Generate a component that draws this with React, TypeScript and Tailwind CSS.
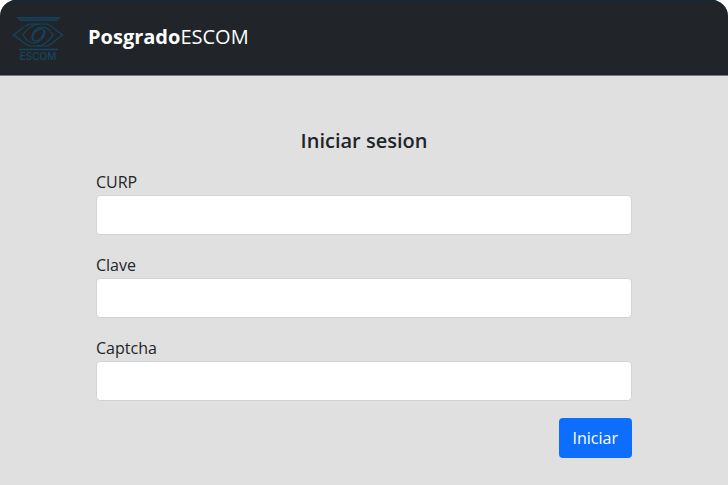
import { useId } from "react";

function Logo() {
  return (
    <svg
      viewBox="0 0 52 46"
      className="h-[46px] w-[52px] shrink-0"
      fill="none"
      stroke="#15455f"
      strokeWidth="1.2"
      strokeLinejoin="round"
      role="img"
      aria-label="ESCOM"
    >
      <path d="M5 2.5H48L45 5.5H8Z" fill="#18394d" strokeWidth="0.8" />
      <path d="M1 20C7 17 11 11 18 9H35C41 11 45 17 51 20C45 23 41 29 35 31H18C11 29 7 23 1 20Z" />
      <path d="M27 9C20 9 14 15 11 20C14 25 18 28 22 28C27 28 32 23 33 18C33 14 29 13 26 15C22 17 20 21 21 25" />
      <path d="M25 31C32 31 38 25 41 20C38 15 34 12 30 12C25 12 20 17 20 22C20 26 24 27 27 25C31 22 32 19 32 15" />
      <path d="M7 34.5H46" strokeWidth="1.4" />
      <text
        x="26"
        y="45"
        textAnchor="middle"
        fontSize="10"
        fill="#15455f"
        stroke="none"
        className="font-[Inter,sans-serif] font-medium"
      >
        ESCOM
      </text>
    </svg>
  );
}

function Field({ label, type = "text" }: { label: string; type?: string }) {
  const id = useId();
  return (
    <div className="mb-[17px]">
      <label htmlFor={id} className="block h-[26px] text-base leading-[26px]">
        {label}
      </label>
      <input
        id={id}
        type={type}
        className="block h-10 w-full rounded border border-[#ced4da] bg-white px-3 outline-none focus:border-[#86b7fe]"
      />
    </div>
  );
}

export default function App() {
  return (
    <div className="bg-white font-['Open_Sans','Noto_Sans',sans-serif] text-[#212529]">
      <div className="min-h-screen overflow-hidden rounded-t-2xl bg-[#e0e0e0]">
        <header className="flex h-[76px] items-center gap-6 border-t border-b border-t-[#0b2a3c] border-b-[#77797c] bg-[#212529] px-3">
          <Logo />
          <a href="#" className="pb-[2px] text-xl text-white">
            <strong className="font-bold">Posgrado</strong>ESCOM
          </a>
        </header>
        <main className="px-24 pt-[50px] pb-6">
          <form onSubmit={(e) => e.preventDefault()}>
            <h1 className="mb-[13px] text-center text-xl leading-[30px] font-semibold">Iniciar sesion</h1>
            <Field label="CURP" />
            <Field label="Clave" type="password" />
            <Field label="Captcha" />
            <div className="flex justify-end">
              <button type="submit" className="h-10 rounded bg-[#0d6efd] px-[14px] text-base text-white">
                Iniciar
              </button>
            </div>
          </form>
        </main>
      </div>
    </div>
  );
}
